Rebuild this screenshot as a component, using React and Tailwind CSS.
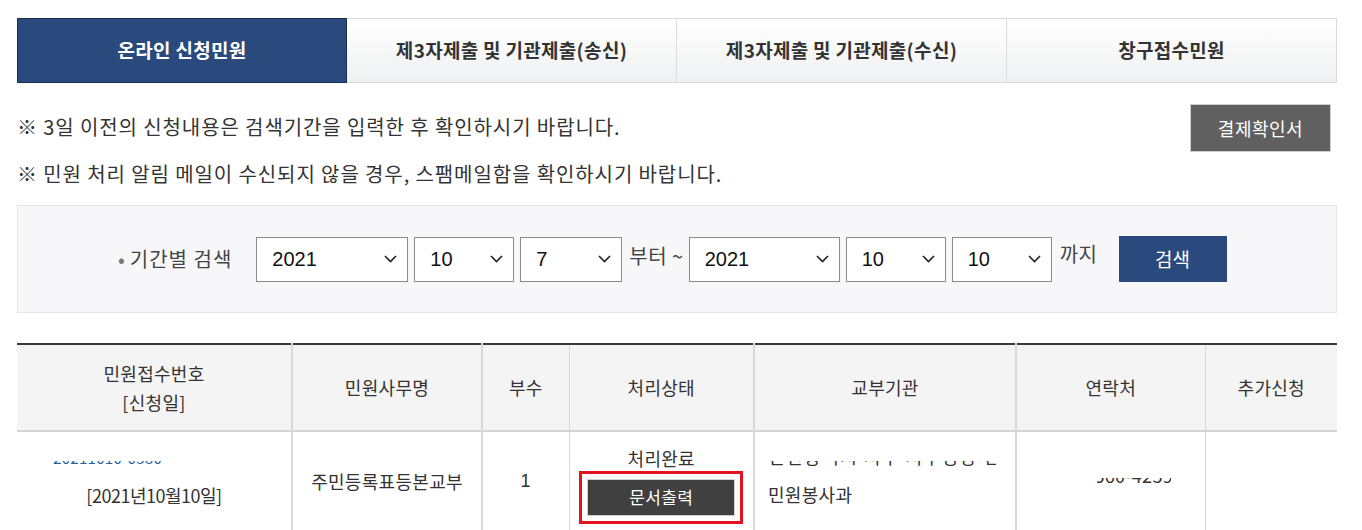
import { useState } from "react";

const KR = { fontFamily: '"Noto Sans CJK KR", "Noto Sans", sans-serif' };
const NUM = { fontFamily: '"Liberation Sans", "Noto Sans CJK KR", sans-serif' };

const TABS = ["온라인 신청민원", "제3자제출 및 기관제출(송신)", "제3자제출 및 기관제출(수신)", "창구접수민원"];

function Chevron() {
    return (
        <svg className="w-[13px] h-[8px] shrink-0" viewBox="0 0 13 8" fill="none" stroke="#222" strokeWidth={1.6}>
            <path d="M1 1l5.5 5.5L12 1" />
        </svg>
    );
}

function Select({ value, w }) {
    return (
        <div className={`${w} h-[45px] bg-white border border-[#8a8a8a] flex items-center justify-between pl-[15px] pr-[10px]`}>
            <span className="text-[20px] text-[#111] leading-none" style={NUM}>{value}</span>
            <Chevron />
        </div>
    );
}

// 위쪽이 가려진 줄: 글자 아래쪽 몇 픽셀만 보인다
function Clipped({ text, h, shift, className }) {
    return (
        <div className={`overflow-hidden ${h} ${className}`}>
            <div className={`${shift} leading-[22px] whitespace-nowrap`}>{text}</div>
        </div>
    );
}

export default function App() {
    const [tab, setTab] = useState(0);

    return (
        <div className="w-[1362px] h-[530px] overflow-hidden bg-white text-[#333]" style={KR}>
            <div className="w-[1320px] ml-[17px] pt-[18px]">
                <div className="grid grid-cols-4 h-[65px]">
                    {TABS.map((t, i) => (
                        <button key={t} onClick={() => setTab(i)}
                            className={tab === i
                                ? "bg-[#2a4a7e] border border-[#1a2d52] text-white text-[19px] font-bold tracking-[0.3px]"
                                : "bg-gradient-to-b from-white to-[#eff0f1] border border-[#dcdcdc] border-l-0 text-[#333] text-[19px] font-bold tracking-[0.3px]"}>
                            {t}
                        </button>
                    ))}
                </div>

                <div className="flex justify-between items-start mt-[21px]">
                    <div className="text-[20px] text-[#333] leading-[24px] pt-[11px] tracking-[0.9px]">
                        <p>※ 3일 이전의 신청내용은 검색기간을 입력한 후 확인하시기 바랍니다.</p>
                        <p className="mt-[23px]">※ 민원 처리 알림 메일이 수신되지 않을 경우, 스팸메일함을 확인하시기 바랍니다.</p>
                    </div>
                    <button className="w-[141px] h-[48px] mr-[6px] bg-[#606060] border border-[#cfcfcf] text-white text-[18px] tracking-[0.5px]">결제확인서</button>
                </div>

                <div className="mt-[19px] h-[108px] bg-[#f7f7f9] border border-[#e5e5e9] flex items-center pl-[100px]">
                    <span className="text-[20px] text-[#444] mr-[24px] tracking-[1px]"><span className="text-[#777] mr-[4px]">•</span>기간별 검색</span>
                    <div className="flex items-center gap-[6px]">
                        <Select value="2021" w="w-[152px]" />
                        <Select value="10" w="w-[100px]" />
                        <Select value="7" w="w-[102px]" />
                    </div>
                    <span className="text-[20px] text-[#444] ml-[7px] mr-[5px] -mt-[6px] tracking-[0.5px]">부터 ~</span>
                    <div className="flex items-center gap-[6px]">
                        <Select value="2021" w="w-[151px]" />
                        <Select value="10" w="w-[100px]" />
                        <Select value="10" w="w-[100px]" />
                    </div>
                    <span className="text-[20px] text-[#444] ml-[8px] -mt-[10px] tracking-[0.5px]">까지</span>
                    <button className="ml-[21px] w-[108px] h-[46px] bg-[#2a4a7e] text-white text-[19px]">검색</button>
                </div>

                <table className="mt-[30px] w-full border-collapse text-[18px] tracking-[0.3px] text-[#333] table-fixed">
                    <colgroup>
                        <col className="w-[275px]" />
                        <col className="w-[190px]" />
                        <col className="w-[87px]" />
                        <col className="w-[185px]" />
                        <col className="w-[262px]" />
                        <col className="w-[189px]" />
                        <col className="w-[132px]" />
                    </colgroup>
                    <thead>
                        <tr className="h-[87px] bg-[#f4f4f4] border-t-[2px] border-t-[#3a3a3a] border-b-[2px] border-b-[#d4d4d4]">
                            <th className="font-normal leading-[29px] border-r-[2px] border-[#d8d8d8]">민원접수번호<br />[신청일]</th>
                            <th className="font-normal border-r-[2px] border-[#d8d8d8]">민원사무명</th>
                            <th className="font-normal border-r border-[#d8d8d8]">부수</th>
                            <th className="font-normal border-r-[2px] border-[#d8d8d8]">처리상태</th>
                            <th className="font-normal border-r-[2px] border-[#d8d8d8]">교부기관</th>
                            <th className="font-normal border-r border-[#d8d8d8]">연락처</th>
                            <th className="font-normal">추가신청</th>
                        </tr>
                    </thead>
                    <tbody>
                        <tr className="h-[100px]">
                            <td className="border-r-[2px] border-[#d8d8d8] align-middle">
                                <div className="pt-[4px]">
                                    <Clipped text="20211010-05807264" h="h-[7px]" shift="-mt-[14px] text-[15px]" className="ml-[36px] w-[108px] text-[#2a5aa0]" />
                                    <div className="text-center leading-[24px] mt-[15px] tracking-[-0.5px]">[2021년10월10일]</div>
                                </div>
                            </td>
                            <td className="border-r-[2px] border-[#d8d8d8] text-center align-middle">주민등록표등본교부</td>
                            <td className="border-r border-[#d8d8d8] text-center align-middle" style={NUM}>1</td>
                            <td className="border-r-[2px] border-[#d8d8d8] align-middle">
                                <div className="pt-[6px]">
                                    <div className="text-center leading-[24px]">처리완료</div>
                                    <div className="mx-auto mt-[1px] w-[164px] border-[3px] border-[#e3141f] p-[5px]">
                                        <button className="w-full h-[37px] bg-[#404040] border border-[#cfcfcf] text-white text-[17px]">문서출력</button>
                                    </div>
                                </div>
                            </td>
                            <td className="border-r-[2px] border-[#d8d8d8] align-middle pl-[13px]">
                                <div className="pt-[4px]">
                                    <Clipped text="인천광역시 서구 서구청장 민원" h="h-[6px]" shift="-mt-[16px] tracking-[1.5px]" className="w-[228px]" />
                                    <div className="leading-[24px] mt-[15px]">민원봉사과</div>
                                </div>
                            </td>
                            <td className="border-r border-[#d8d8d8] align-middle">
                                <Clipped text="032-560-4259" h="h-[7px]" shift="-mt-[14px] -ml-[40px]" className="ml-[80px] w-[74px]" />
                            </td>
                            <td></td>
                        </tr>
                    </tbody>
                </table>
            </div>
        </div>
    );
}
